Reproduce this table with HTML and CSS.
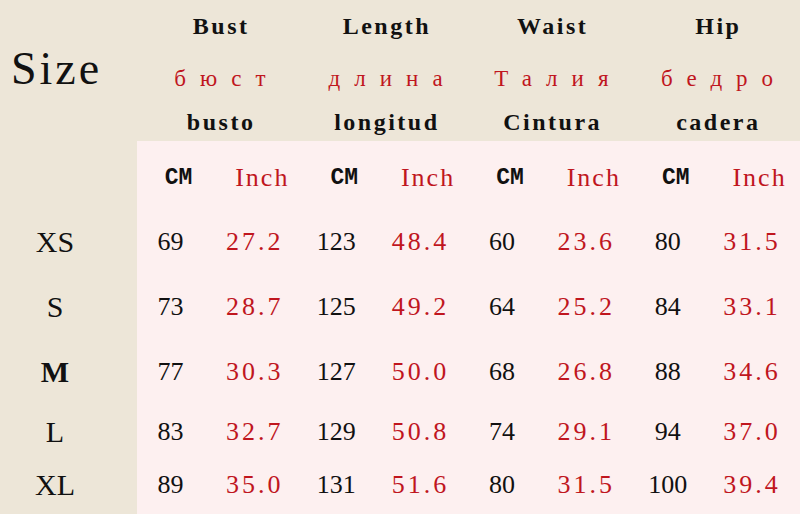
FILE: index.html
```html
<!DOCTYPE html>
<html>
<head>
<meta charset="utf-8">
<link rel="stylesheet" href="styles.css">
</head>
<body>
<div class="chart">
  <div class="top">
    <div class="size-label">Size</div>
    <div class="en">Bust</div>
    <div class="en">Length</div>
    <div class="en">Waist</div>
    <div class="en">Hip</div>
    <div class="ru">бюст</div>
    <div class="ru">длина</div>
    <div class="ru">Талия</div>
    <div class="ru">бедро</div>
    <div class="es">busto</div>
    <div class="es">longitud</div>
    <div class="es">Cintura</div>
    <div class="es">cadera</div>
  </div>
  <div class="table">
    <div class="sz"></div>
    <div class="unit cm">CM</div><div class="unit in">Inch</div>
    <div class="unit cm">CM</div><div class="unit in">Inch</div>
    <div class="unit cm">CM</div><div class="unit in">Inch</div>
    <div class="unit cm">CM</div><div class="unit in">Inch</div>

    <div class="sz">XS</div>
    <div class="n">69</div><div class="r">27.2</div>
    <div class="n">123</div><div class="r">48.4</div>
    <div class="n">60</div><div class="r">23.6</div>
    <div class="n">80</div><div class="r">31.5</div>

    <div class="sz">S</div>
    <div class="n">73</div><div class="r">28.7</div>
    <div class="n">125</div><div class="r">49.2</div>
    <div class="n">64</div><div class="r">25.2</div>
    <div class="n">84</div><div class="r">33.1</div>

    <div class="sz bold">M</div>
    <div class="n">77</div><div class="r">30.3</div>
    <div class="n">127</div><div class="r">50.0</div>
    <div class="n">68</div><div class="r">26.8</div>
    <div class="n">88</div><div class="r">34.6</div>

    <div class="sz">L</div>
    <div class="n">83</div><div class="r">32.7</div>
    <div class="n">129</div><div class="r">50.8</div>
    <div class="n">74</div><div class="r">29.1</div>
    <div class="n">94</div><div class="r">37.0</div>

    <div class="sz last">XL</div>
    <div class="n last">89</div><div class="r last">35.0</div>
    <div class="n last">131</div><div class="r last">51.6</div>
    <div class="n last">80</div><div class="r last">31.5</div>
    <div class="n last">100</div><div class="r last">39.4</div>
  </div>
</div>
</body>
</html>
```
FILE: styles.css
```css
html, body {
  margin: 0;
  padding: 0;
}
body {
  background: #ede6d8;
  width: 800px;
  height: 514px;
  overflow: hidden;
  color: #111;
}
.chart {
  width: 800px;
  height: 514px;
  display: flex;
  flex-direction: column;
}
.top {
  display: grid;
  grid-template-columns: 137px repeat(4, 1fr);
  grid-template-rows: 52px 52px 37px;
  height: 141px;
}
.top > div {
  display: flex;
  align-items: center;
  justify-content: center;
  white-space: nowrap;
}
.size-label {
  grid-row: 1 / 4;
  grid-column: 1;
  font-family: "Liberation Serif", serif;
  font-size: 46px;
  letter-spacing: 3px;
  justify-content: flex-start !important;
  padding-left: 11px;
  padding-bottom: 4px;
}
.en {
  font-family: "Liberation Serif", serif;
  font-weight: bold;
  font-size: 24px;
  letter-spacing: 2.5px;
  padding-left: 2.5px;
}
.ru {
  font-family: "Liberation Serif", serif;
  font-size: 23px;
  color: #c0161e;
  letter-spacing: 14px;
  padding-left: 14px;
  padding-top: 2px;
}
.es {
  font-family: "Liberation Serif", serif;
  font-weight: bold;
  font-size: 24px;
  letter-spacing: 2.5px;
  padding-left: 2.5px;
}
.table {
  flex: 1;
  display: grid;
  grid-template-columns: 137px repeat(8, 1fr);
  grid-template-rows: 69px 64px 66px 64px 56px 54px;
  background: #fdf0f0;
}
.table > div {
  display: flex;
  align-items: center;
  justify-content: center;
  white-space: nowrap;
}
.table > .last {
  padding-bottom: 4px;
}
.sz {
  background: #ede6d8;
  font-family: "Liberation Serif", serif;
  font-size: 30px;
  padding-right: 27px;
}
.sz.bold {
  font-weight: bold;
}
.unit {
  font-size: 23px;
  padding-top: 5px;
}
.unit.cm {
  font-family: "Liberation Mono", monospace;
  font-weight: bold;
}
.unit.in {
  font-family: "Liberation Serif", serif;
  font-size: 26px;
  color: #c0161e;
  letter-spacing: 2px;
  padding-left: 2px;
}
.n {
  font-family: "Liberation Serif", serif;
  font-size: 26px;
  padding-right: 16px;
}
.r {
  font-family: "Liberation Serif", serif;
  font-size: 26px;
  color: #c0161e;
  letter-spacing: 3px;
  padding-right: 13px;
}
```
